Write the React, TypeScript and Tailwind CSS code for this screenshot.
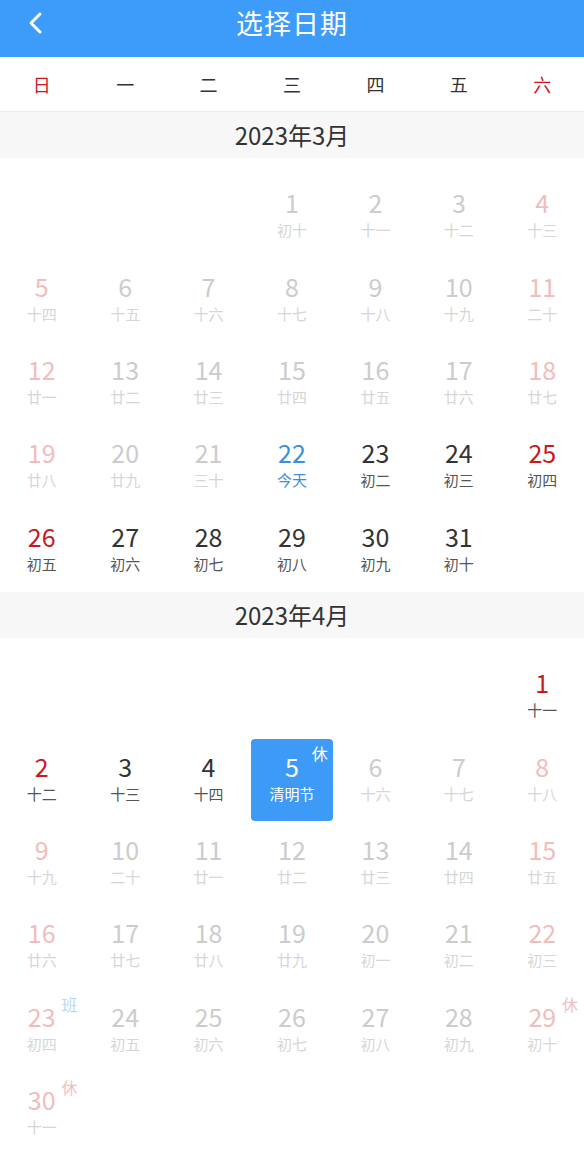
import React from 'react';

type Day = {
  d: number;
  lunar: string;
  enabled?: boolean;
  today?: boolean;
  selected?: boolean;
  badge?: '休' | '班';
};

type Month = { title: string; offset: number; days: Day[] };

const marchLunar = ['初十','十一','十二','十三','十四','十五','十六','十七','十八','十九','二十','廿一','廿二','廿三','廿四','廿五','廿六','廿七','廿八','廿九','三十','今天','初二','初三','初四','初五','初六','初七','初八','初九','初十'];
const aprilLunar = ['十一','十二','十三','十四','清明节','十六','十七','十八','十九','二十','廿一','廿二','廿三','廿四','廿五','廿六','廿七','廿八','廿九','初一','初二','初三','初四','初五','初六','初七','初八','初九','初十','十一'];

const aprilBadges: Record<number, '休' | '班'> = { 5: '休', 23: '班', 29: '休', 30: '休' };

const months: Month[] = [
  {
    title: '2023年3月',
    offset: 3,
    days: marchLunar.map((lunar, i) => ({
      d: i + 1,
      lunar,
      enabled: i + 1 >= 22,
      today: i + 1 === 22,
    })),
  },
  {
    title: '2023年4月',
    offset: 6,
    days: aprilLunar.map((lunar, i) => ({
      d: i + 1,
      lunar,
      enabled: i + 1 <= 5,
      selected: i + 1 === 5,
      badge: aprilBadges[i + 1],
    })),
  },
];

const weekdays = ['日', '一', '二', '三', '四', '五', '六'];

function DayCell({ day, weekend }: { day: Day; weekend: boolean }) {
  let numCls = 'text-[#cccccc]';
  let lunarCls = 'text-[#d6d6d6]';
  let badgeCls = '';
  if (day.selected) {
    numCls = 'text-white';
    lunarCls = 'text-white';
    badgeCls = 'text-white';
  } else if (day.today) {
    numCls = 'text-[#3a90dc]';
    lunarCls = 'text-[#3a90dc]';
  } else if (day.enabled) {
    numCls = weekend ? 'text-[#c8191f]' : 'text-[#333333]';
    lunarCls = 'text-[#555555]';
  } else if (weekend) {
    numCls = 'text-[#f2bcbc]';
  }
  if (!day.selected && day.badge) {
    badgeCls = day.badge === '班' ? 'text-[#b9d8f2]' : 'text-[#f2c0c0]';
  }

  return (
    <div className="h-[83.4px] p-[1px] flex">
      <div
        className={
          'relative flex-1 flex flex-col items-center justify-center pb-[5px] rounded-[4px] ' +
          (day.selected ? 'bg-[#3d9bf7]' : '')
        }
      >
        <span className={'text-[25px] leading-[28px] ' + numCls}>{day.d}</span>
        <span className={'text-[15px] leading-[20px] mt-[4px] ' + lunarCls}>{day.lunar}</span>
        {day.badge && (
          <span className={'absolute top-[6px] right-[5px] text-[16px] leading-none ' + badgeCls}>
            {day.badge}
          </span>
        )}
      </div>
    </div>
  );
}

function MonthBlock({ month }: { month: Month }) {
  const blanks = Array.from({ length: month.offset });
  return (
    <div>
      <div className="h-[46px] bg-[#f7f7f7] flex items-center justify-center text-[24px] text-[#333333]">
        {month.title}
      </div>
      <div className="grid grid-cols-7 pt-[17px]">
        {blanks.map((_, i) => (
          <div key={'b' + i} className="h-[83.4px]" />
        ))}
        {month.days.map((day, i) => {
          const col = (month.offset + i) % 7;
          return <DayCell key={day.d} day={day} weekend={col === 0 || col === 6} />;
        })}
      </div>
    </div>
  );
}

export default function App() {
  return (
    <div
      className="w-[584px] h-[1158px] overflow-hidden bg-white"
      style={{ fontFamily: '"Noto Sans CJK SC", "Noto Sans", sans-serif' }}
    >
      {/* 顶部栏 */}
      <div className="h-[57px] bg-[#3d9bf9] relative flex items-center justify-center">
        <button className="absolute left-[22px] top-[9px] w-[28px] h-[28px] flex items-center justify-center">
          <svg width="18" height="24" viewBox="0 0 18 24" fill="none">
            <polyline points="13,3 4,12 13,21" stroke="white" strokeWidth="3" strokeLinecap="round" strokeLinejoin="round" />
          </svg>
        </button>
        <h1 className="text-[27px] text-white leading-none -mt-[12px] tracking-[1px]">选择日期</h1>
      </div>

      {/* 星期 */}
      <div className="h-[55px] grid grid-cols-7 border-b border-[#ececec]">
        {weekdays.map((w, i) => (
          <div
            key={w}
            className={
              'flex items-center justify-center text-[18px] ' +
              (i === 0 || i === 6 ? 'text-[#c8191f]' : 'text-[#333333]')
            }
          >
            {w}
          </div>
        ))}
      </div>

      {months.map((m) => (
        <MonthBlock key={m.title} month={m} />
      ))}
    </div>
  );
}
